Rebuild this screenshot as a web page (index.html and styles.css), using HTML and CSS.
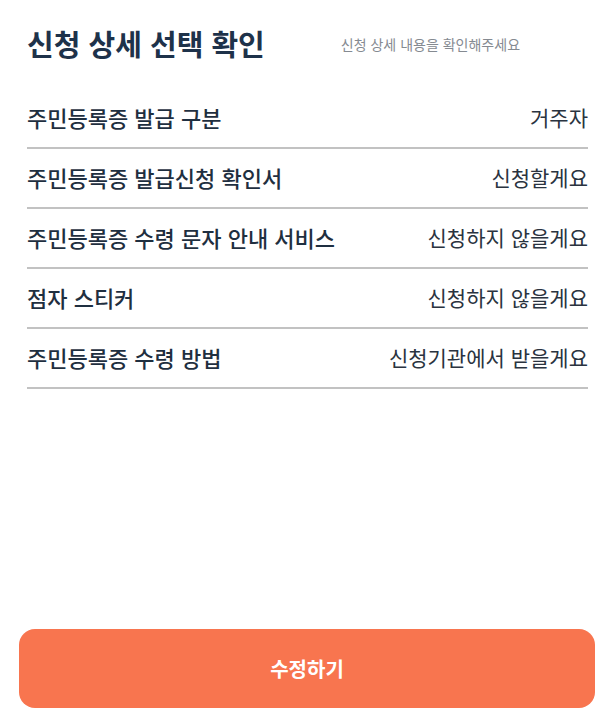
FILE: index.html
```html
<!DOCTYPE html>
<html lang="ko">
<head>
<meta charset="utf-8">
<link rel="stylesheet" href="styles.css">
</head>
<body>
<div class="page">
  <header class="head">
    <h1 class="title">신청 상세 선택 확인</h1>
    <p class="sub">신청 상세 내용을 확인해주세요</p>
  </header>
  <ul class="list">
    <li class="row"><span class="label">주민등록증 발급 구분</span><span class="value">거주자</span></li>
    <li class="row"><span class="label">주민등록증 발급신청 확인서</span><span class="value">신청할게요</span></li>
    <li class="row"><span class="label">주민등록증 수령 문자 안내 서비스</span><span class="value">신청하지 않을게요</span></li>
    <li class="row"><span class="label">점자 스티커</span><span class="value">신청하지 않을게요</span></li>
    <li class="row"><span class="label">주민등록증 수령 방법</span><span class="value">신청기관에서 받을게요</span></li>
  </ul>
  <div class="spacer"></div>
  <button class="btn">수정하기</button>
</div>
</body>
</html>
```
FILE: styles.css
```css
* { box-sizing: border-box; }
html, body { margin: 0; padding: 0; background: #fff; }
body { font-family: "Noto Sans CJK KR", "Noto Sans", sans-serif; color: #1f2f40; }
.page { width: 610px; height: 718px; display: flex; flex-direction: column; padding: 0 15px 10px 19px; }
.head { display: flex; align-items: flex-start; padding: 24px 0 0 8px; height: 89px; }
.title { margin: 0; font-size: 29px; font-weight: 700; line-height: 38px; color: #1e324a; letter-spacing: 0; }
.sub { margin: 0 0 0 76px; font-size: 14px; line-height: 38px; color: #858a91; letter-spacing: 0; padding-top: 1px; }
.list { list-style: none; margin: 0 7px 0 8px; padding: 0; }
.row { display: flex; justify-content: space-between; align-items: center; height: 60px; border-bottom: 2px solid #c2c2c2; padding-bottom: 2px; }
.label { font-size: 22px; color: #1f2f40; font-weight: 500; }
.value { font-size: 21px; color: #2a3340; }
.spacer { flex: 1; }
.btn { height: 79px; width: 576px; border: 0; border-radius: 16px; background: #f8754f; color: #fff; font-family: inherit; font-size: 20px; font-weight: 700; }
```
